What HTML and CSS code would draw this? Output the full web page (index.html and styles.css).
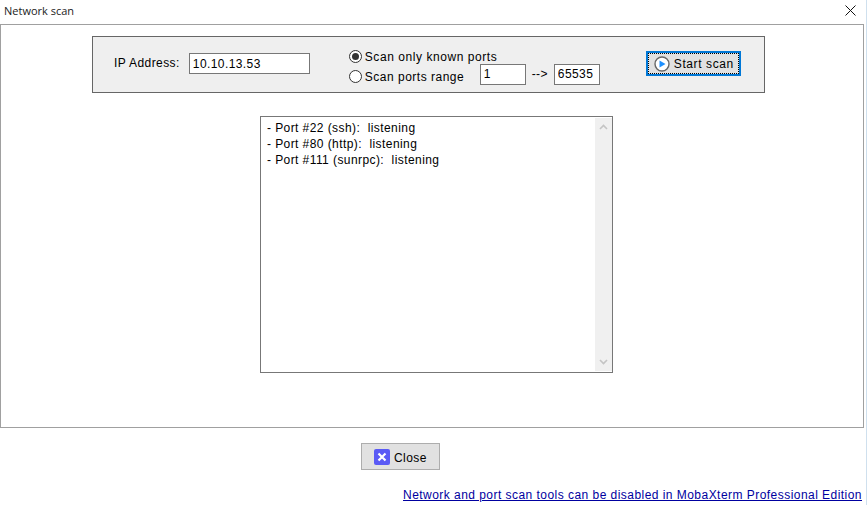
FILE: index.html
```html
<!DOCTYPE html>
<html lang="en">
<head>
    <meta charset="UTF-8">
    <meta name="viewport" content="width=device-width, initial-scale=1.0">
    <title>Network scan</title>
    <link rel="stylesheet" href="styles.css">
</head>
<body>
    <div class="window">
        <div class="title-bar">
            <span class="title">Network scan</span>
            <svg class="close-x" width="11" height="11" viewBox="0 0 11 11">
                <path d="M0.5 0.5L10.5 10.5M10.5 0.5L0.5 10.5" stroke="#111" stroke-width="1" fill="none"/>
            </svg>
        </div>
        <div class="main-panel">
            <div class="scan-box">
                <label class="ip-label" for="ip">IP Address:</label>
                <input class="field ip-field" type="text" id="ip" value="10.10.13.53">
                <div class="scan-options">
                    <div class="radio-row">
                        <span class="radio checked"></span>
                        <span class="known-label">Scan only known ports</span>
                    </div>
                    <div class="radio-row">
                        <span class="radio"></span>
                        <span class="range-label">Scan ports range</span>
                        <input class="field port-from" type="text" value="1">
                        <span class="arrow">--&gt;</span>
                        <input class="field port-to" type="text" value="65535">
                    </div>
                </div>
                <button class="start-btn">
                    <svg width="16" height="16" viewBox="0 0 16 16">
                        <circle cx="8" cy="8" r="7" fill="#fff" stroke="#666" stroke-width="1.4"/>
                        <path d="M5.5 4.5L11.5 8L5.5 11.5Z" fill="#1e90ff"/>
                    </svg>
                    Start scan
                </button>
            </div>
            <div class="results">
                <div class="results-text">
                    <div>- Port #22 (ssh):&nbsp; listening</div>
                    <div>- Port #80 (http):&nbsp; listening</div>
                    <div>- Port #111 (sunrpc):&nbsp; listening</div>
                </div>
                <div class="scrollbar">
                    <svg width="9" height="6" viewBox="0 0 9 6"><path d="M1 5L4.5 1.5L8 5" stroke="#c4c4c4" stroke-width="1.6" fill="none"/></svg>
                    <svg width="9" height="6" viewBox="0 0 9 6"><path d="M1 1L4.5 4.5L8 1" stroke="#c4c4c4" stroke-width="1.6" fill="none"/></svg>
                </div>
            </div>
        </div>
        <div class="close-row">
            <button class="close-btn">
                <svg width="16" height="16" viewBox="0 0 16 16">
                    <rect width="16" height="16" rx="2" fill="#5a5af5"/>
                    <path d="M4.5 4.5L11.5 11.5M11.5 4.5L4.5 11.5" stroke="#fff" stroke-width="2.2" fill="none"/>
                </svg>
                <span class="close-label">Close</span>
            </button>
        </div>
        <div class="link-row">
            <a href="#">Network and port scan tools can be disabled in MobaXterm Professional Edition</a>
        </div>
    </div>
</body>
</html>
```

FILE: styles.css
```css
body {
    margin: 0;
    background-color: #fff;
    font-family: "Liberation Sans", Arial, sans-serif;
    font-size: 12px;
    letter-spacing: 0.42px;
    color: #000;
}
.window {
    width: 867px;
    height: 505px;
    overflow: hidden;
    box-sizing: border-box;
    border-right: 1px solid #cfe0ee;
    padding-right: 2px;
}
.title-bar {
    display: flex;
    justify-content: space-between;
    align-items: center;
    height: 24px;
    padding: 0 8px 3px 4px;
    box-sizing: border-box;
}
.title {
    font-family: "Open Sans", sans-serif;
    font-size: 11px;
    letter-spacing: 0;
    color: #222;
    margin-top: -1px;
}
.main-panel {
    height: 404px;
    box-sizing: border-box;
    border: 1px solid #a0a0a0;
    padding-top: 11px;
    display: flex;
    flex-direction: column;
    align-items: center;
}
.scan-box {
    display: flex;
    align-items: center;
    width: 673px;
    height: 57px;
    margin-left: -7px;
    box-sizing: border-box;
    border: 1px solid #666;
    background-color: #efefef;
    padding-left: 21px;
}
.ip-label {
    margin-right: 9px;
    margin-top: -3px;
}
.field {
    height: 21px;
    box-sizing: border-box;
    border: 1px solid #777;
    background-color: #fff;
    padding: 0 3px;
    margin: 0;
    font: inherit;
    letter-spacing: inherit;
    color: #000;
    outline: none;
}
.ip-field {
    width: 121px;
    margin-right: 39px;
    margin-top: -2px;
}
.scan-options {
    width: 297px;
    display: flex;
    flex-direction: column;
    margin-top: 6px;
}
.radio-row {
    display: flex;
    align-items: center;
    height: 16px;
}
.radio-row:first-child {
    margin-top: -2px;
    margin-bottom: 4px;
}
.radio {
    width: 13px;
    height: 13px;
    box-sizing: border-box;
    border: 1px solid #333;
    border-radius: 50%;
    background-color: #fff;
    margin-right: 3px;
    position: relative;
}
.radio.checked::after {
    content: "";
    position: absolute;
    left: 2px;
    top: 2px;
    width: 7px;
    height: 7px;
    border-radius: 50%;
    background-color: #333;
}
.known-label {
    letter-spacing: 0.56px;
}
.range-label {
    width: 115px;
    margin-top: 1px;
    letter-spacing: 0.5px;
}
.port-from {
    width: 46px;
    margin-top: -5px;
}
.arrow {
    width: 28px;
    text-align: center;
    margin-top: -5px;
}
.port-to {
    width: 46px;
    margin-top: -5px;
}
.start-btn {
    display: flex;
    align-items: center;
    gap: 4px;
    width: 95px;
    height: 25px;
    box-sizing: border-box;
    margin: -2px 0 0 0;
    padding: 0 0 0 6px;
    border: 2px solid #0078d7;
    outline: 1px dotted #000;
    outline-offset: -3px;
    background-color: #e1e1e1;
    font: inherit;
    letter-spacing: 0.6px;
    color: #000;
}
.results {
    display: flex;
    width: 353px;
    height: 257px;
    margin-top: 23px;
    margin-left: 9px;
    box-sizing: border-box;
    border: 1px solid #777;
    background-color: #fff;
}
.results-text {
    flex: 1;
    padding: 3px 6px;
    line-height: 16px;
}
.scrollbar {
    width: 17px;
    margin: 1px 0;
    background-color: #f0f0f0;
    display: flex;
    flex-direction: column;
    justify-content: space-between;
    align-items: center;
    padding: 6px 0;
    box-sizing: border-box;
}
.close-row {
    display: flex;
    justify-content: center;
    margin-top: 15px;
}
.close-btn {
    display: flex;
    align-items: center;
    gap: 4px;
    width: 79px;
    height: 27px;
    box-sizing: border-box;
    margin: 0 0 0 -63px;
    padding: 0 0 0 12px;
    border: 1px solid #adadad;
    background-color: #e1e1e1;
    font: inherit;
    letter-spacing: inherit;
    color: #000;
}
.close-label {
    margin-top: 2px;
}
.link-row {
    display: flex;
    justify-content: flex-end;
    margin-top: 18px;
    padding-right: 2px;
}
.link-row a {
    color: #0000a0;
    letter-spacing: 0.46px;
}
```
